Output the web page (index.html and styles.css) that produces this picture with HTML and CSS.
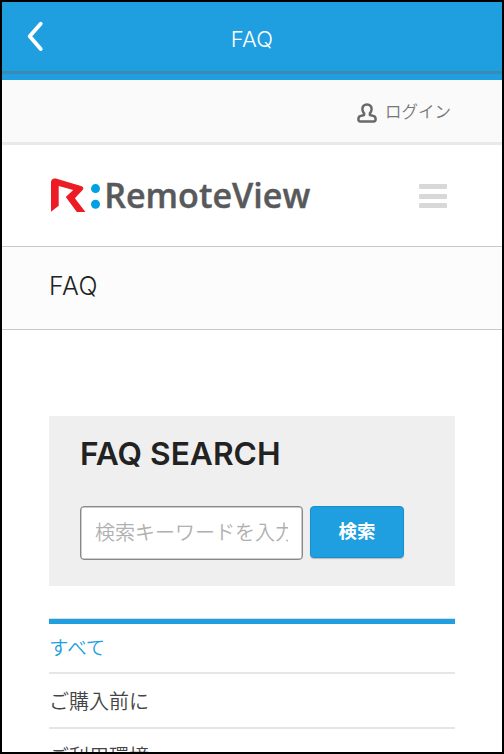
FILE: index.html
```html
<!DOCTYPE html>
<html lang="ja">
<head>
<meta charset="utf-8">
<title>FAQ</title>
<link rel="stylesheet" href="styles.css">
</head>
<body>
<div class="screen">
  <header class="topbar">
    <svg class="back" viewBox="0 0 18 30"><path d="M15.7 3.7 4.7 16.3 15.7 29"/></svg>
    <h1 class="topbar-title">FAQ</h1>
  </header>
  <div class="login">
    <svg class="user" viewBox="0 0 20 20"><path d="M10 1.6C6.9 1.6 5.3 3.6 5.4 6.2C5.5 8.2 6.3 9.4 7.1 10.4V12L3.1 13.1C1.7 13.6 1.4 14.5 1.4 16.3C1.4 17.8 2.2 18.4 3.4 18.4H16.6C17.8 18.4 18.6 17.8 18.6 16.3C18.6 14.5 18.3 13.6 16.9 13.1L12.9 12V10.4C13.7 9.4 14.5 8.2 14.6 6.2C14.7 3.6 13.1 1.6 10 1.6Z"/></svg>
    <span class="login-text">ログイン</span>
  </div>
  <div class="brand">
    <svg class="logo" viewBox="0 0 264 40">
      <path class="logo-mark" d="M1 7.2Q1.4 2.8 5.8 3.6L31 10.9Q34.8 12.2 32.6 15L24.9 23.2L35.4 37H26.8L15.8 22L23.2 14.9L8.7 11V30.8L1 36.8Z"/>
      <circle class="logo-dot" cx="45.5" cy="13.6" r="4.5"/>
      <circle class="logo-dot" cx="45.5" cy="29.3" r="4.5"/>
      <text class="logo-text" x="54.2" y="33.4" textLength="206" lengthAdjust="spacingAndGlyphs">RemoteView</text>
    </svg>
    <div class="menu"><i></i><i></i><i></i></div>
  </div>
  <div class="page-title">FAQ</div>
  <main class="content">
    <section class="search">
      <h2 class="search-title">FAQ SEARCH</h2>
      <div class="search-row">
        <div class="field"><div class="placeholder">検索キーワードを入力</div></div>
        <button class="submit">検索</button>
      </div>
    </section>
    <ul class="categories">
      <li class="active">すべて</li>
      <li>ご購入前に</li>
      <li>ご利用環境</li>
    </ul>
  </main>
</div>
</body>
</html>
```
FILE: styles.css
```css
* { box-sizing: border-box; }
body { margin: 0; overflow: hidden; font-family: Inter, "Noto Sans CJK JP", sans-serif; color: #333; }
.screen { width: 504px; height: 754px; border: 2px solid #000; overflow: hidden; background: #fff; }
.topbar {
  height: 78px;
  display: grid;
  grid-template-columns: 64px 1fr 64px;
  align-items: start;
  background: linear-gradient(#1f9fdf 69px, #3b8ab3 69px, #3b8ab3 72px, #1f9fdf 72px);
}
.back { width: 18px; height: 30px; margin: 18px 0 0 23px; fill: none; stroke: #fff; stroke-width: 3.9; stroke-linecap: round; stroke-linejoin: round; overflow: visible; }
.topbar-title { margin: 22px 0 0; text-align: center; font-size: 22px; line-height: 30px; font-weight: 350; letter-spacing: .3px; color: #fff; }
.login {
  height: 65px;
  display: flex;
  justify-content: flex-end;
  align-items: center;
  padding-right: 51px;
  gap: 8px;
  background: #fafafa;
  border-bottom: 3px solid #e9e9e9;
}
.user { width: 20px; height: 20px; margin-top: 3px; fill: none; stroke: #696969; stroke-width: 2.5; stroke-linejoin: round; }
.login-text { margin-top: 1px; font-size: 16.5px; line-height: 24px; font-weight: 350; color: #777; }
.brand { height: 101px; display: flex; justify-content: space-between; padding: 30px 55px 0 48px; }
.logo { width: 264px; height: 40px; overflow: visible; }
.logo-mark { fill: #ed1c24; }
.logo-dot { fill: #00a0e3; }
.logo-text { font: 600 34px "Open Sans", sans-serif; fill: #58595b; stroke: #58595b; stroke-width: .4; }
.menu { width: 28px; margin-top: 9px; display: flex; flex-direction: column; gap: 4.5px; }
.menu i { height: 5px; border-radius: 1px; background: #d8d8d8; }
.page-title {
  height: 84px;
  padding: 23px 47px;
  border: solid #c9c9c9;
  border-width: 1px 0;
  background: #fcfcfc;
  font-size: 25px;
  line-height: 32px;
  font-weight: 300;
  letter-spacing: .5px;
  color: #222;
}
.content { padding: 86px 47px 0; }
.search { height: 170px; padding: 17px 31px; background: #efefef; }
.search-title { margin: 0 0 33px; font-size: 31.7px; line-height: 41px; font-weight: 600; color: #222; white-space: nowrap; }
.search-row { display: flex; gap: 7px; margin-top: -1px; }
.field { width: 223px; height: 54px; padding: 0 14px; border: 1px solid #888; border-radius: 4px; background: #fff; box-shadow: inset 0 0 0 .5px #999; }
.placeholder { overflow: hidden; white-space: nowrap; font-size: 20px; line-height: 52px; font-weight: 350; color: #b0b0b0; }
.submit {
  width: 94px;
  height: 52px;
  padding: 0 0 4px;
  border: 1px solid #178fcf;
  border-radius: 4px;
  background: #1f9fdf;
  box-shadow: 0 1px 1px #bbb;
  font: 700 18.5px "Noto Sans CJK JP", sans-serif;
  color: #fff;
}
.categories { margin: 32px 0 0; padding: 0; list-style: none; border-top: 1px solid #dedede; }
.categories li { height: 55px; border-bottom: 2px solid #e6e6e6; font-size: 20px; line-height: 56px; font-weight: 350; color: #444; }
.categories .active { border-top: 5px solid #1f9fdf; line-height: 48px; color: #1f9fdf; font-size: 19.5px; }
```
